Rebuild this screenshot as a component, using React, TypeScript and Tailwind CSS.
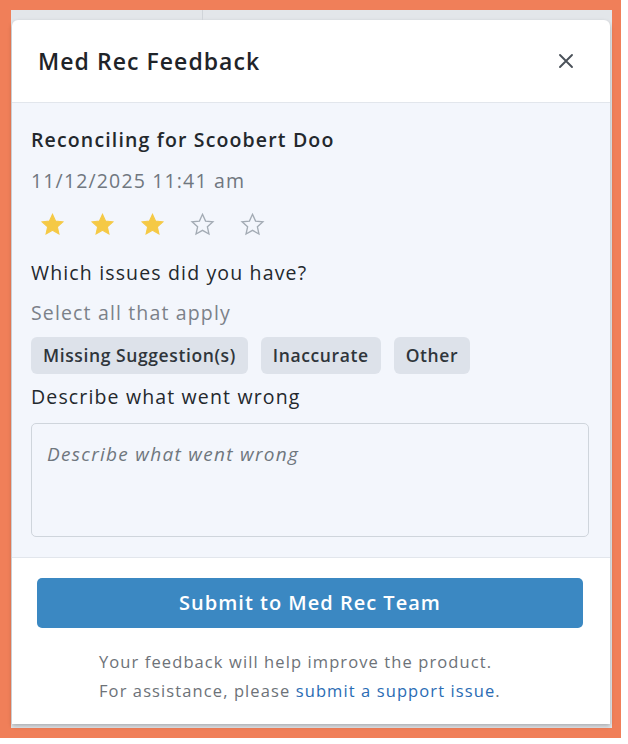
import React from "react";

const STAR = "M12 2.2l2.95 6.5 7.05.72-5.3 4.78 1.5 6.95L12 17.6l-6.2 3.55 1.5-6.95L2 9.42l7.05-.72z";

function Star({ filled }: { filled: boolean }) {
  return (
    <svg width="25" height="25" viewBox="0 0 24 24">
      <path
        d={STAR}
        fill={filled ? "#f5c945" : "none"}
        stroke={filled ? "#f5c945" : "#a3abb4"}
        strokeWidth={filled ? 1 : 1.3}
        strokeLinejoin="miter"
      />
    </svg>
  );
}

export default function App() {
  const chips = ["Missing Suggestion(s)", "Inaccurate", "Other"];
  return (
    <div
      className="w-[628px] h-[744px] bg-white"
      style={{ fontFamily: '"Open Sans", "Noto Sans", sans-serif' }}
    >
      <div className="w-[621px] h-[738px] border-l-[11px] border-t-[10px] border-r-[9px] border-b-[10px] border-[#f07f59] bg-[#e3e6ea]">
        <div className="flex h-[10px]">
          <div className="w-[192px] border-r border-[#d0d4d9]" />
        </div>
        <div className="ml-[1px] mr-[2px] h-[704px] bg-white rounded-t-[6px] shadow-[0_2px_4px_rgba(0,0,0,0.25)] flex flex-col overflow-hidden">
          {/* Header */}
          <div className="h-[83px] shrink-0 flex items-center justify-between pl-[26px] pr-[36px] border-b border-[#e2e6ec]">
            <div className="text-[23px] tracking-[1.05px] font-semibold text-[#1f2429] leading-none">Med Rec Feedback</div>
            <svg width="16" height="16" viewBox="0 0 16 16">
              <path d="M2 2L14 14M14 2L2 14" stroke="#4a5159" strokeWidth="1.9" strokeLinecap="round" />
            </svg>
          </div>
          {/* Body */}
          <div className="bg-[#f3f6fc] border-b border-[#e2e6ec] pl-[19px] pr-[21px] pt-[23px] pb-[20px] flex flex-col">
            <div className="text-[19.5px] tracking-[1.15px] leading-[28px] font-semibold text-[#23282d]">Reconciling for Scoobert Doo</div>
            <div className="mt-[13px] text-[19.5px] tracking-[1.15px] leading-[28px] text-[#70777f]">11/12/2025 11:41 am</div>
            <div className="mt-[17px] flex gap-[8px] h-[24px]">
              {[true, true, true, false, false].map((f, i) => (
                <div key={i} className="w-[42px] h-[24px] flex items-center justify-center">
                  <Star filled={f} />
                </div>
              ))}
            </div>
            <div className="mt-[23px] text-[19.5px] tracking-[1.15px] leading-[28px] text-[#23282d]">Which issues did you have?</div>
            <div className="mt-[12px] text-[19.5px] tracking-[1.15px] leading-[28px] text-[#7b8189]">Select all that apply</div>
            <div className="mt-[10px] flex gap-[13px]">
              {chips.map((c) => (
                <div
                  key={c}
                  className="h-[37px] px-[12px] rounded-[6px] bg-[#dde2ea] flex items-center text-[17.5px] tracking-[0.6px] font-semibold text-[#2f353b]"
                >
                  {c}
                </div>
              ))}
            </div>
            <div className="mt-[9px] text-[19.5px] tracking-[1.15px] leading-[28px] text-[#23282d]">Describe what went wrong</div>
            <div className="mt-[12px] h-[114px] border border-[#cfd5dc] rounded-[5px] px-[15px] pt-[16px]">
              <div className="text-[19px] tracking-[1.3px] leading-[28px] italic text-[#6f767e]">Describe what went wrong</div>
            </div>
          </div>
          {/* Footer */}
          <div className="flex-1 bg-white flex flex-col">
            <div className="mt-[20px] ml-[25px] w-[546px] h-[50px] rounded-[5px] bg-[#3b88c2] flex items-center justify-center text-white text-[20px] tracking-[1px] font-semibold">
              Submit to Med Rec Team
            </div>
            <div className="mt-[19px] pl-[87px] text-[16.5px] tracking-[1.1px] leading-[29px] text-[#6d7278]">
              <div>Your feedback will help improve the product.</div>
              <div>
                For assistance, please <span className="text-[#2a6cb4]">submit a support issue</span>.
              </div>
            </div>
          </div>
        </div>
      </div>
    </div>
  );
}
